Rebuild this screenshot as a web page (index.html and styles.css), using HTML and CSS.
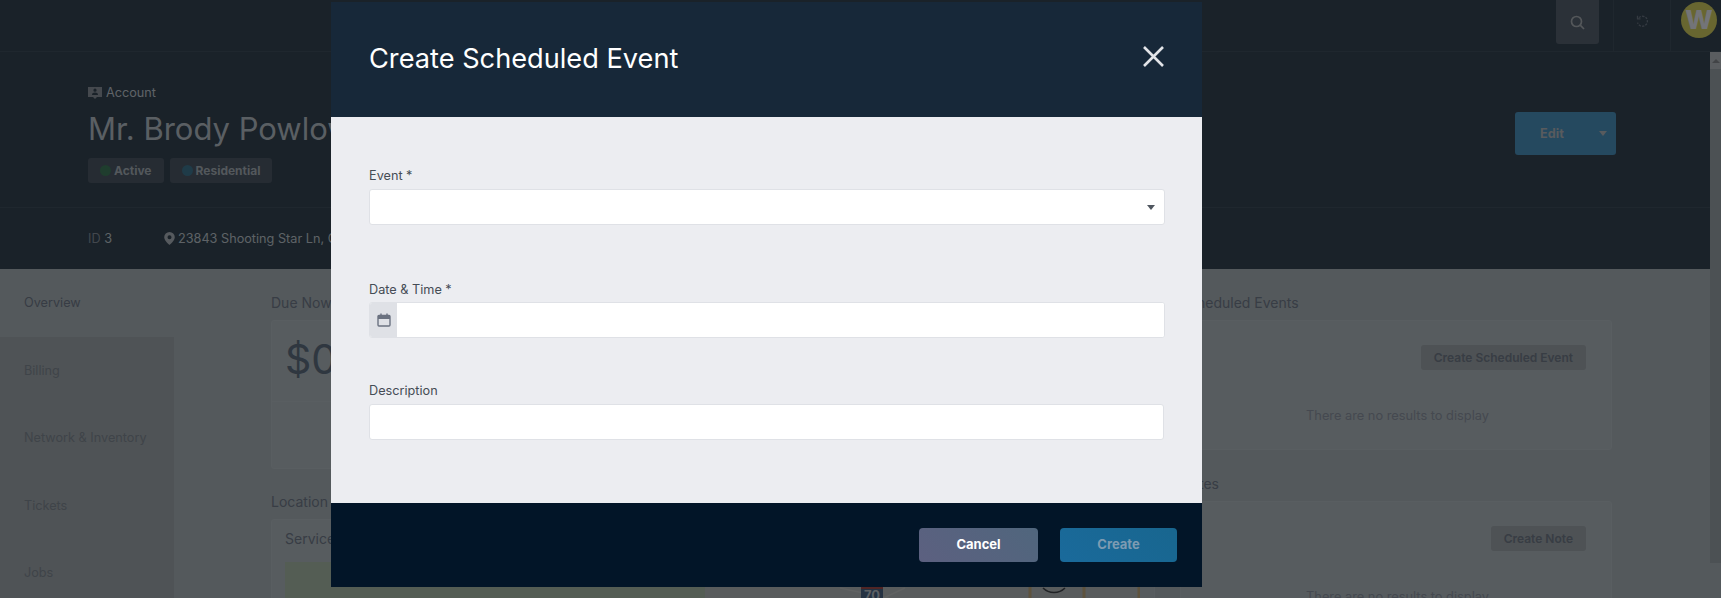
FILE: index.html
```html
<html lang="en">

<head>
    <meta charset="UTF-8">
    <meta name="viewport" content="width=device-width, initial-scale=1.0">
    <title>Mr. Brody Powlowski - Account</title>
    <link rel="stylesheet" href="styles.css">
</head>

<body>
    <div class="topbar">
        <button class="search-btn" type="button">
            <svg width="15" height="15" viewBox="0 0 15 15" fill="none" stroke="currentColor" stroke-width="1.7">
                <circle cx="6.500" cy="6.500" r="5"></circle>
                <path d="M10.200 10.200 14 14"></path>
            </svg>
        </button>
        <div class="topbar-cell">
            <svg class="history-icon" width="13" height="13" viewBox="0 0 13 13" fill="none" stroke="currentColor" stroke-width="1.300">
                <path d="M3 2.600A5 5 0 1 1 1.600 7.600" stroke-dasharray="2.200 1.200"></path>
                <path d="M1.500 0.800v3h3"></path>
            </svg>
        </div>
        <div class="topbar-cell avatar-cell">
            <div class="avatar">W</div>
        </div>
    </div>

    <div class="scroll-area">
        <div class="page">
            <div class="account-header">
                <div class="account-info">
                    <div class="account-type">
                        <svg class="account-icon" width="14" height="14" viewBox="0 0 14 14" fill="currentColor">
                            <path d="M0 1h14v10H9l-2 2-2-2H0zM7 2.600a1.600 1.600 0 1 0 0 3.200 1.600 1.600 0 0 0 0-3.200zM4 9h6c0-1.600-1.400-2.400-3-2.400S4 7.400 4 9z" fill-rule="evenodd"></path>
                        </svg>
                        Account
                    </div>
                    <h1>Mr. Brody Powlowski</h1>
                    <div class="badges">
                        <span class="badge"><i class="dot dot-green"></i>Active</span>
                        <span class="badge"><i class="dot dot-blue"></i>Residential</span>
                    </div>
                </div>
                <div class="edit-btn">
                    <span>Edit</span>
                    <i class="caret"></i>
                </div>
            </div>

            <div class="account-meta">
                <span class="meta-id">ID <b>3</b></span>
                <span class="meta-address">
                    <svg class="pin-icon" width="11" height="13" viewBox="0 0 11 13" fill="currentColor">
                        <path d="M5.500 0A5.300 5.300 0 0 0 .2 5.300C.2 8.800 5.500 13 5.500 13s5.300-4.200 5.300-7.700A5.300 5.300 0 0 0 5.500 0zm0 7.200a2 2 0 1 1 0-4 2 2 0 0 1 0 4z"></path>
                    </svg>
                    23843 Shooting Star Ln, Chesterfield
                </span>
            </div>

            <div class="content">
                <ul class="sidenav">
                    <li class="active">Overview</li>
                    <li>Billing</li>
                    <li>Network &amp; Inventory</li>
                    <li>Tickets</li>
                    <li>Jobs</li>
                </ul>

                <div class="column column-left">
                    <h2>Due Now</h2>
                    <div class="card due-card">
                        <div class="due-amount">$0.00</div>
                        <div class="due-foot">Auto pay off</div>
                    </div>
                    <h2 class="section-title">Location</h2>
                    <div class="card location-card">
                        <div class="location-title">Service Address</div>
                        <svg class="map" viewBox="0 0 855 40" preserveAspectRatio="none">
                            <rect width="855" height="40" fill="#b2b8ba"></rect>
                            <rect width="420" height="40" fill="#a8baa8"></rect>
                            <path d="M555 26 620 40M590 40l30-14" stroke="#c0c4c4" stroke-width="1.500" fill="none"></path>
                            <path d="M745 25v15M799 25v15M854 25v15" stroke="#bca67c" stroke-width="3" fill="none"></path>
                            <path d="M758 26c6 6 16 6 22 0" stroke="#40444a" stroke-width="1.500" fill="none"></path>
                            <path d="M576 24h22v16h-22z" fill="#4a6484"></path>
                            <path d="M576 24h22v3h-22z" fill="#a04a4a"></path>
                            <text x="587" y="38" class="map-shield">70</text>
                        </svg>
                    </div>
                </div>

                <div class="column column-right">
                    <h2>Scheduled Events</h2>
                    <div class="card list-card">
                        <div class="list-actions"><span class="small-btn">Create Scheduled Event</span></div>
                        <p class="empty">There are no results to display</p>
                    </div>
                    <h2 class="section-title">Notes</h2>
                    <div class="card list-card">
                        <div class="list-actions"><span class="small-btn">Create Note</span></div>
                        <p class="empty">There are no results to display</p>
                    </div>
                </div>
            </div>
        </div>

        <div class="scrollbar">
            <div class="scroll-up"><i></i></div>
        </div>
    </div>

    <div class="backdrop"></div>

    <div class="modal">
        <div class="modal-header">
            <h3>Create Scheduled Event</h3>
            <svg class="modal-close" width="21" height="21" viewBox="0 0 21 21" stroke="currentColor" stroke-width="2.600">
                <path d="M1 1l19 19M20 1 1 20"></path>
            </svg>
        </div>
        <div class="modal-body">
            <div class="field field-event">
                <label for="event">Event *</label>
                <div class="select-box" id="event"><i class="caret"></i></div>
            </div>
            <div class="field field-date">
                <label for="date">Date &amp; Time *</label>
                <div class="input-group">
                    <span class="addon">
                        <svg width="14" height="14" viewBox="0 0 14 14" fill="none" stroke="currentColor" stroke-width="1.400">
                            <rect x="1" y="2.500" width="12" height="10.500" rx="1"></rect>
                            <path d="M1 4.500h12" stroke-width="3"></path>
                            <path d="M4 0.500v2.500M10 0.500v2.500"></path>
                        </svg>
                    </span>
                    <input type="text" id="date">
                </div>
            </div>
            <div class="field field-description">
                <label for="description">Description</label>
                <input type="text" id="description">
            </div>
        </div>
        <div class="modal-footer">
            <button class="btn btn-cancel" type="button">Cancel</button>
            <button class="btn btn-create" type="button">Create</button>
        </div>
    </div>
</body>

</html>
```

FILE: styles.css
```css
html,
body {
    height: 100%;
}

body {
    margin: 0;
    height: 598px;
    overflow: hidden;
    background-color: #a8b2b8;
    font-family: Inter, "Liberation Sans", sans-serif;
    font-size: 12.7px;
    color: #6e7888;
}

/* top bar */
.topbar {
    display: flex;
    justify-content: flex-end;
    height: 51px;
    background-color: #344452;
    border-bottom: 1px solid #3e4e5c;
}

.search-btn {
    width: 43px;
    height: 44px;
    margin-right: 14px;
    padding: 0;
    border: none;
    border-radius: 0 0 3px 3px;
    background-color: #566270;
    color: #a8aeb4;
}

.topbar-cell {
    display: flex;
    justify-content: center;
    align-items: center;
    box-sizing: border-box;
    width: 57px;
    height: 51px;
    padding-bottom: 9px;
    border-left: 1px solid #3e4e5c;
}

.avatar-cell {
    width: 51px;
    justify-content: flex-start;
    align-items: flex-start;
    padding: 2px 0 0 10px;
}

.history-icon {
    color: #6a7684;
}

.avatar {
    width: 36px;
    height: 36px;
    border-radius: 50%;
    background-color: #d0cc60;
    color: #e6e8f0;
    font-size: 26px;
    font-weight: 800;
    line-height: 36px;
    text-align: center;
}

/* page */
.scroll-area {
    display: flex;
    align-items: flex-start;
}

.page {
    flex: 1;
    min-width: 0;
}

.scrollbar {
    width: 11px;
    height: 511px;
    background-color: #98a2a8;
}

.scroll-up {
    display: flex;
    justify-content: center;
    align-items: center;
    height: 17px;
    background-color: #b4bbc0;
}

.scroll-up i {
    border-left: 4px solid transparent;
    border-right: 4px solid transparent;
    border-bottom: 4px solid #84898e;
}

.account-header {
    display: flex;
    justify-content: space-between;
    height: 155px;
    padding: 0 94px 0 88px;
    background-color: #344452;
    border-bottom: 1px solid #3e4e5c;
}

.account-type {
    display: flex;
    align-items: center;
    gap: 4px;
    margin-top: 33px;
    color: #bec6ce;
}

.account-icon {
    color: #8a929c;
}

.account-header h1 {
    margin: 9px 0 9px;
    font-size: 31px;
    font-weight: 400;
    line-height: 40px;
    color: #b4bec6;
}

.badges {
    display: flex;
    gap: 6px;
}

.badge {
    display: flex;
    align-items: center;
    gap: 3px;
    height: 25px;
    padding: 0 12px;
    border-radius: 3px;
    background-color: #4c5866;
    font-size: 12px;
    font-weight: 700;
    color: #a6b0b8;
}

.dot {
    width: 11px;
    height: 11px;
    margin-top: -1px;
    border-radius: 50%;
}

.dot-green {
    background-color: #3f7a5c;
}

.dot-blue {
    background-color: #3f7690;
}

.edit-btn {
    display: flex;
    align-items: center;
    justify-content: space-between;
    box-sizing: border-box;
    width: 101px;
    height: 43px;
    margin-top: 60px;
    padding: 0 9px 0 25px;
    border-radius: 3px;
    background-color: #4a92be;
    font-weight: 700;
    color: #b0b6bc;
}

.caret {
    border-left: 4px solid transparent;
    border-right: 4px solid transparent;
    border-top: 5px solid currentColor;
}

.account-meta {
    display: flex;
    align-items: center;
    gap: 52px;
    height: 61px;
    padding-left: 88px;
    background-color: #344452;
    color: #bcc4cc;
}

.meta-id {
    color: #848f9a;
}

.meta-id b {
    font-weight: 400;
    color: #bcc4cc;
}

.meta-address {
    display: flex;
    align-items: center;
    gap: 3px;
}

.pin-icon {
    color: #acb4bc;
}

/* content */
.content {
    display: grid;
    grid-template-columns: 174px 1006px 432px;
    height: 329px;
    overflow: hidden;
}

.sidenav {
    margin: 0;
    padding: 0;
    list-style: none;
    background-color: #9ea6ac;
}

.sidenav li {
    display: flex;
    align-items: center;
    height: 67.500px;
    padding-left: 24px;
    color: #7e8892;
}

.sidenav li.active {
    background-color: #a8b2b8;
    color: #6e7888;
}

.column {
    padding-top: 25px;
}

.column-left {
    padding: 25px 25px 0 97px;
}

.column h2 {
    margin: 0 0 8px;
    height: 18px;
    font-size: 14px;
    font-weight: 400;
    line-height: 18px;
    color: #707a8a;
}

.column .section-title {
    margin-top: 24px;
}

.column-right .section-title {
    margin-top: 25px;
}

.card {
    box-sizing: border-box;
    border: 1px solid #b2bcc2;
    border-radius: 3px;
    background-color: #aeb8be;
}

.due-card {
    height: 149px;
}

.due-amount {
    height: 80px;
    padding-left: 13px;
    border-bottom: 1px solid #b2bcc2;
    font-size: 41px;
    line-height: 76px;
    color: #5e6e80;
}

.due-foot {
    padding-top: 10px;
    font-size: 10px;
    text-align: center;
    color: #8a94a0;
}

.location-title {
    height: 32px;
    padding: 10px 13px 0;
    font-size: 14px;
    color: #707a8a;
}

.map {
    display: block;
    width: 855px;
    height: 40px;
    margin-left: 13px;
}

.map-shield {
    font-size: 13px;
    font-weight: 700;
    text-anchor: middle;
    fill: #b8c0c8;
}

.list-card {
    height: 130px;
    padding: 24px 25px 0;
}

.list-actions {
    display: flex;
    justify-content: flex-end;
}

.small-btn {
    display: block;
    height: 25px;
    padding: 0 13px;
    border-radius: 3px;
    background-color: #9ca4aa;
    font-size: 12px;
    font-weight: 600;
    line-height: 25px;
    color: #707a88;
}

.empty {
    margin: 38px 0 0;
    padding-left: 3px;
    font-size: 12.8px;
    text-align: center;
    color: #8a92a0;
}

/* modal */
.backdrop {
    position: fixed;
    top: 0;
    left: 0;
    width: 100%;
    height: 100%;
    background-color: rgba(0, 0, 0, 0.5);
}

.modal {
    position: absolute;
    top: 2px;
    left: 331px;
    width: 871px;
    height: 585px;
    display: flex;
    flex-direction: column;
}

.modal-header {
    display: flex;
    justify-content: space-between;
    align-items: center;
    box-sizing: border-box;
    height: 115px;
    padding: 0 38px;
    background-color: #172839;
    color: #fff;
}

.modal-header h3 {
    margin: -2px 0 0;
    font-size: 27.200px;
    font-weight: 400;
}

.modal-close {
    margin-top: -6px;
    color: #e2e4e8;
}

.modal-body {
    flex: 1;
    padding: 0 38px;
    background-color: #ecedf1;
    color: #454c55;
}

.field label {
    display: block;
    height: 18px;
    margin-bottom: 4px;
    padding-top: 1px;
    line-height: 18px;
}

.field-event {
    padding-top: 49px;
}

.field-date {
    padding-top: 55px;
}

.field-date label {
    margin-bottom: 3px;
}

.field-description {
    padding-top: 43px;
}

.select-box,
.input-group,
.field input {
    box-sizing: border-box;
    height: 36px;
    width: 796px;
    border: 1px solid #dfe1e6;
    border-radius: 3px;
    background-color: #fff;
}

.select-box {
    display: flex;
    justify-content: flex-end;
    align-items: center;
    padding-right: 9px;
    color: #4f565f;
}

.field input {
    display: block;
    padding: 0 10px;
}

.field-description input {
    width: 795px;
}

.input-group {
    display: flex;
    overflow: hidden;
}

.input-group input {
    flex: 1;
    height: 100%;
    border: none;
    border-radius: 0;
}

.addon {
    display: flex;
    justify-content: center;
    align-items: center;
    width: 27px;
    background-color: #dfe1e6;
    color: #6b7280;
}

.modal-footer {
    display: flex;
    justify-content: flex-end;
    align-items: center;
    gap: 22px;
    box-sizing: border-box;
    height: 84px;
    padding: 0 25px;
    background-color: #021528;
}

.btn {
    height: 34px;
    padding: 0 0 2px;
    border: none;
    border-radius: 4px;
    font-family: inherit;
    font-size: 13px;
    font-weight: 700;
}

.btn-cancel {
    width: 119px;
    background: linear-gradient(45deg, #5c6080, #50667d);
    color: #fff;
}

.btn-create {
    width: 117px;
    background: linear-gradient(45deg, #1a6a9b, #18668f);
    color: #7d9bb2;
}
```
